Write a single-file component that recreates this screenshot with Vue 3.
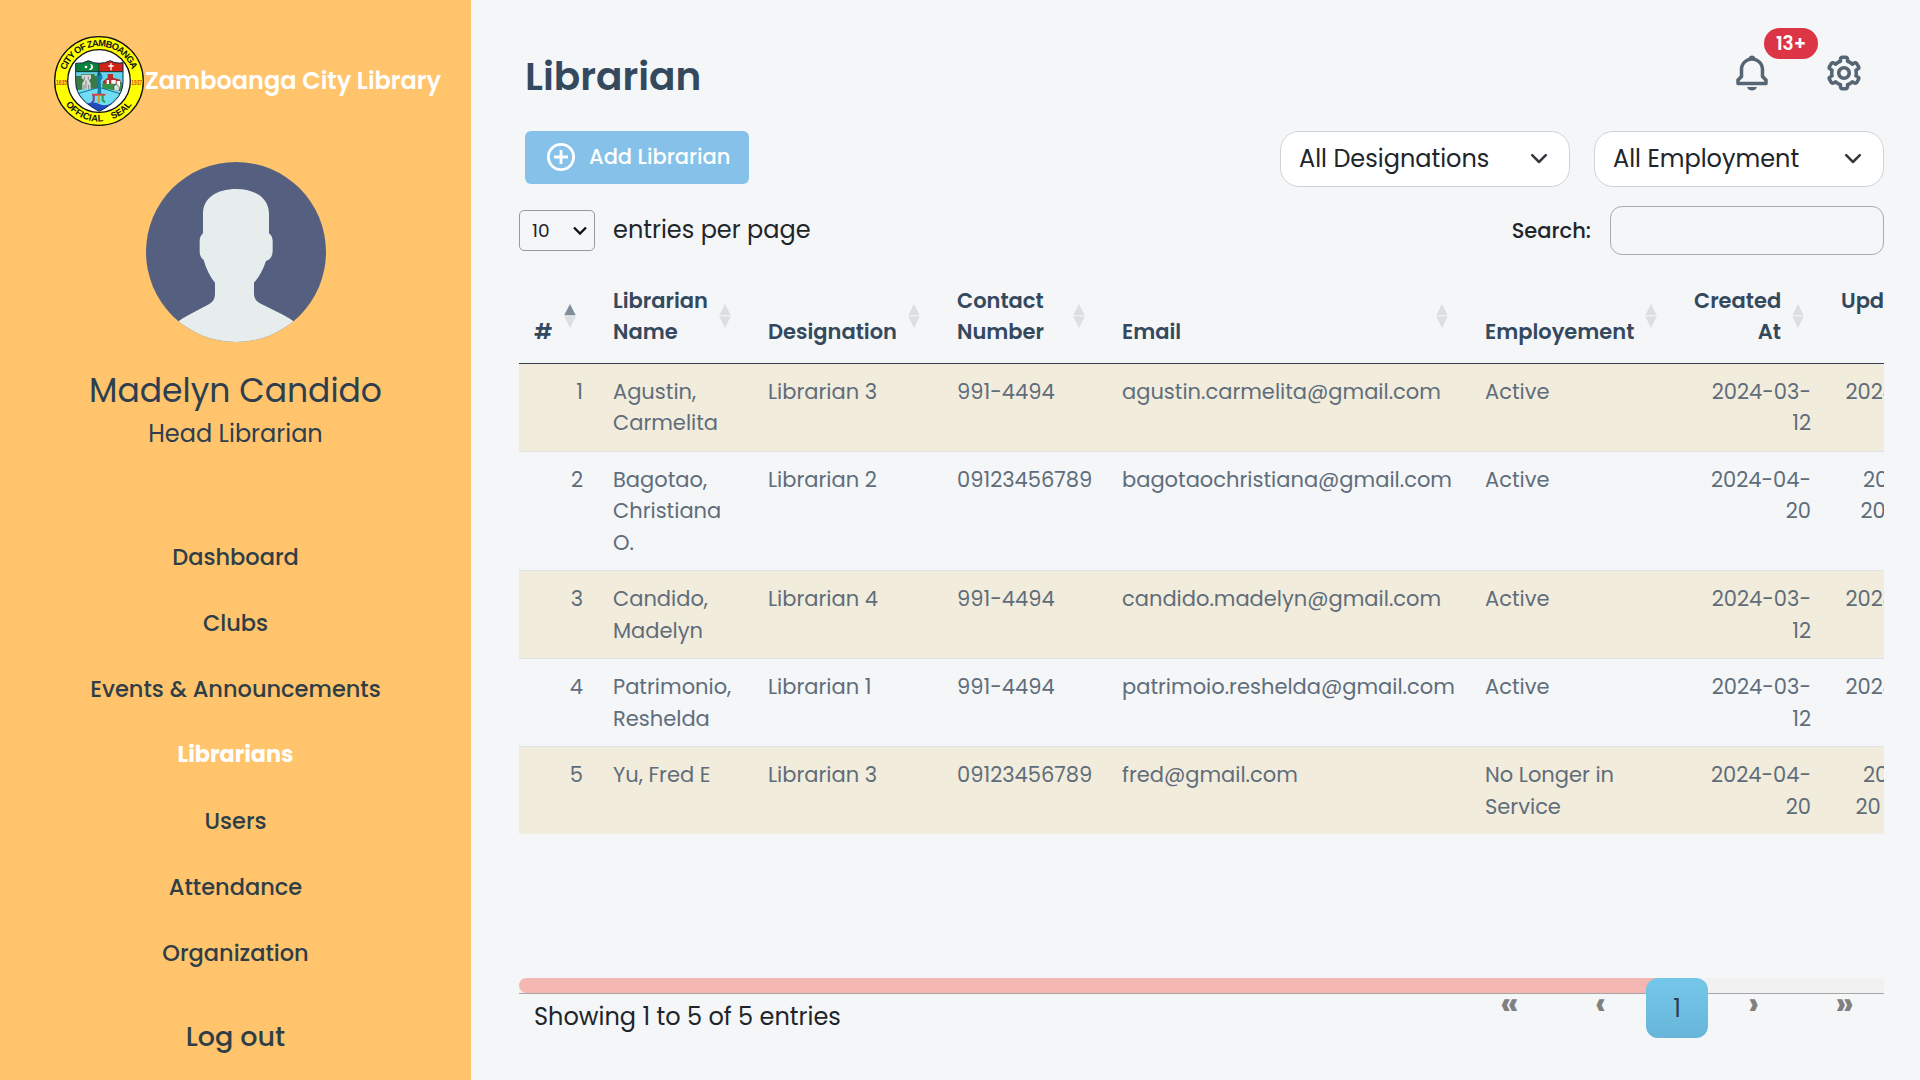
<script setup>
const nav = [
  { label: 'Dashboard' },
  { label: 'Clubs' },
  { label: 'Events & Announcements' },
  { label: 'Librarians', active: true },
  { label: 'Users' },
  { label: 'Attendance' },
  { label: 'Organization' },
]

const filters = ['All Designations', 'All Employment']

const colWidths = [79, 155, 189, 165, 363, 209, 147, 150]

const columns = [
  { lines: ['#'], sorted: true },
  { lines: ['Librarian', 'Name'] },
  { lines: ['Designation'] },
  { lines: ['Contact', 'Number'] },
  { lines: ['Email'] },
  { lines: ['Employement'] },
  { lines: ['Created', 'At'], right: true },
  { lines: ['Updated', '\u00a0'], clipped: true },
]

// Each cell is a list of lines; the last column carries an indent per line.
const rows = [
  {
    cells: [['1'], ['Agustin,', 'Carmelita'], ['Librarian 3'], ['991-4494'], ['agustin.carmelita@gmail.com'], ['Active'], ['2024-03-', '12']],
    updated: [['2024-03-', 4.5]],
  },
  {
    tall: true,
    cells: [['2'], ['Bagotao,', 'Christiana', 'O.'], ['Librarian 2'], ['09123456789'], ['bagotaochristiana@gmail.com'], ['Active'], ['2024-04-', '20']],
    updated: [['20', 22], ['20', 19.5]],
  },
  {
    cells: [['3'], ['Candido,', 'Madelyn'], ['Librarian 4'], ['991-4494'], ['candido.madelyn@gmail.com'], ['Active'], ['2024-03-', '12']],
    updated: [['2024-03-', 4.5]],
  },
  {
    cells: [['4'], ['Patrimonio,', 'Reshelda'], ['Librarian 1'], ['991-4494'], ['patrimoio.reshelda@gmail.com'], ['Active'], ['2024-03-', '12']],
    updated: [['2024-03-', 4.5]],
  },
  {
    cells: [['5'], ['Yu, Fred E'], ['Librarian 3'], ['09123456789'], ['fred@gmail.com'], ['No Longer in', 'Service'], ['2024-04-', '20']],
    updated: [['20', 22], ['20', 14.5]],
  },
]
</script>

<template>
  <div class="app">
    <aside class="sidebar">
      <div class="brand">
        <svg class="seal" viewBox="162 108 270 270">
          <defs>
            <path id="arc-top" d="M198 211 A104 104 0 0 1 396 211" />
            <path id="arc-bottom" d="M197 313 A122 122 0 0 0 399 309" />
            <clipPath id="shield"><path d="M227 190 Q248 192 265 182 Q280 190 297 190 Q314 190 331 182 Q346 192 369 188 V245 C369 290 335 315 298 334 C262 315 227 290 227 245 Z" /></clipPath>
          </defs>
          <circle cx="297" cy="243" r="133" fill="#ffff00" stroke="#111" stroke-width="4" />
          <circle cx="297" cy="243" r="94" fill="#fff" stroke="#111" stroke-width="4" />
          <g clip-path="url(#shield)">
            <rect x="220" y="178" width="156" height="160" fill="#63d5ea" />
            <rect x="220" y="178" width="78" height="37" fill="#08813c" />
            <rect x="298" y="178" width="78" height="37" fill="#cf2418" />
            <path d="M226 228h18v-6h40v6h12v42h-70z" fill="#397a46" />
            <path d="M245 224h28v12l-6 4 5 10v26h-25v-26l6-10-8-5z" fill="#d7d5d5" />
            <path d="M253 230v9M265 230v9M252 255v18M266 255v18M258 242v24" stroke="#858585" stroke-width="3" />
            <path d="M306 252l20-10 40 4v28l-30 14-28-20z" fill="#359447" />
            <path d="M309 244l14-11v-11h16v11l22 6v12h-52z" fill="#b92c2b" />
            <path d="M320 240h7v12h-7zM334 240h13v11h-13zM350 243h10v23h-10z" fill="#fff" />
            <path d="M341 258l9-6 8 9v12h-16z" fill="#ddd" stroke="#333" stroke-width="2" />
            <path d="M227 271l70-7 69 10-68 64z" fill="#70ddf5" />
            <path d="M227 283L297 262L367 283" fill="none" stroke="#186f88" stroke-width="3" />
            <path d="M292 218q8-5 13 4l3 12-6 8 2 42h-12l2-42-5-10z" fill="#167da8" />
            <path d="M276 284h40" stroke="#d9433c" stroke-width="6" />
            <path d="M281 286v16l-6 7" fill="none" stroke="#7e3a98" stroke-width="6" />
            <path d="M296 286v23" stroke="#cf9c22" stroke-width="6" />
            <path d="M308 286v15l7 6" fill="none" stroke="#2c9c4a" stroke-width="6" />
            <path d="M262 311q18-7 36 1t36-2l-35 28z" fill="#234bc0" />
            <path d="M297 190V228M227 215H369" stroke="#15352b" stroke-width="3" />
          </g>
          <path d="M270 192a9 9 0 1 1-4 17a10 10 0 0 0 4-17z" fill="#fff" />
          <circle cx="258" cy="201" r="4" fill="#fff" />
          <path d="M333 190v21M325 198h16" stroke="#fff" stroke-width="4" />
          <path d="M227 190 Q248 192 265 182 Q280 190 297 190 Q314 190 331 182 Q346 192 369 188 V245 C369 290 335 315 298 334 C262 315 227 290 227 245 Z" fill="none" stroke="#14243d" stroke-width="3" />
          <text class="seal-text"><textPath href="#arc-top" textLength="260">CITY OF ZAMBOANGA</textPath></text>
          <text class="seal-text"><textPath href="#arc-bottom" textLength="130">OFFICIAL</textPath></text>
          <text class="seal-text"><textPath href="#arc-bottom" startOffset="158" textLength="74">SEAL</textPath></text>
          <text x="168" y="256" textLength="33" lengthAdjust="spacingAndGlyphs" class="seal-year">1635</text>
          <text x="394" y="256" textLength="32" lengthAdjust="spacingAndGlyphs" class="seal-year">1937</text>
        </svg>
        <span class="brand-name">Zamboanga City Library</span>
      </div>

      <svg class="avatar" viewBox="438 486 540 540">
        <defs><clipPath id="avatar-clip"><circle cx="708" cy="756" r="270" /></clipPath></defs>
        <g clip-path="url(#avatar-clip)">
          <rect x="438" y="486" width="540" height="540" fill="#556080" />
          <path fill="#e7eced" d="M708 567C766 567 807 594 807 642V700C815 706 818 715 818 723V752C818 768 811 779 798 783C790 808 778 830 762 848V880C762 896 769 905 784 912L846 943Q866 953 890 970V1040H526V970Q550 953 570 943L628 912C640 905 645 896 645 880V848C630 830 619 808 611 780C603 774 599 766 599 752V723C599 715 602 706 609 700V642C609 594 650 567 708 567Z" />
        </g>
      </svg>

      <div class="user-name">Madelyn Candido</div>
      <div class="user-role">Head Librarian</div>

      <nav class="nav">
        <a v-for="item in nav" :key="item.label" class="nav-item" :class="{ active: item.active }">{{ item.label }}</a>
      </nav>
      <a class="logout">Log out</a>
    </aside>

    <main class="main">
      <header class="header">
        <h1 class="title">Librarian</h1>
        <div class="header-icons">
          <div class="bell">
            <svg viewBox="0 0 24 24" class="icon"><path d="M19 13.586V10c0-3.217-2.185-5.927-5.145-6.742C13.562 2.520 12.846 2 12 2s-1.562.520-1.855 1.258C7.185 4.074 5 6.783 5 10v3.586l-1.707 1.707A.996.996 0 0 0 3 16v2a1 1 0 0 0 1 1h16a1 1 0 0 0 1-1v-2a.996.996 0 0 0-.293-.707L19 13.586zM19 17H5v-.586l1.707-1.707A.996.996 0 0 0 7 14v-4c0-2.757 2.243-5 5-5s5 2.243 5 5v4c0 .266.105.520.293.707L19 16.414V17zm-7 5a2.980 2.980 0 0 0 2.818-2H9.182A2.980 2.980 0 0 0 12 22z" /></svg>
            <span class="badge">13+</span>
          </div>
          <svg viewBox="0 0 24 24" class="icon"><path d="M12 16c2.206 0 4-1.794 4-4s-1.794-4-4-4-4 1.794-4 4 1.794 4 4 4zm0-6c1.084 0 2 .916 2 2s-.916 2-2 2-2-.916-2-2 .916-2 2-2z" /><path d="m2.845 16.136 1 1.730c.531.917 1.809 1.261 2.730.730l.529-.306A8.100 8.100 0 0 0 9 19.402V20c0 1.103.897 2 2 2h2c1.103 0 2-.897 2-2v-.598a8.132 8.132 0 0 0 1.896-1.111l.529.306c.923.530 2.198.188 2.731-.731l.999-1.729a2.001 2.001 0 0 0-.731-2.732l-.505-.292a7.718 7.718 0 0 0 0-2.224l.505-.292a2.002 2.002 0 0 0 .731-2.732l-.999-1.729c-.531-.920-1.808-1.265-2.731-.732l-.529.306A8.100 8.100 0 0 0 15 4.598V4c0-1.103-.897-2-2-2h-2c-1.103 0-2 .897-2 2v.598a8.132 8.132 0 0 0-1.896 1.111l-.529-.306c-.924-.531-2.200-.187-2.731.732l-.999 1.729a2.001 2.001 0 0 0 .731 2.732l.505.292a7.683 7.683 0 0 0 0 2.223l-.505.292a2.003 2.003 0 0 0-.731 2.733zm3.326-2.758A5.703 5.703 0 0 1 6 12c0-.462.058-.926.170-1.378a.999.999 0 0 0-.470-1.108l-1.123-.650.998-1.729 1.145.662a.997.997 0 0 0 1.188-.142 6.071 6.071 0 0 1 2.384-1.399A1 1 0 0 0 11 5.300V4h2v1.300a1 1 0 0 0 .708.956 6.083 6.083 0 0 1 2.384 1.399.999.999 0 0 0 1.188.142l1.144-.661 1 1.729-1.124.649a1 1 0 0 0-.470 1.108c.112.452.170.916.170 1.378 0 .461-.058.925-.171 1.378a1 1 0 0 0 .471 1.108l1.123.649-.998 1.729-1.145-.661a.996.996 0 0 0-1.188.142 6.071 6.071 0 0 1-2.384 1.399A1 1 0 0 0 13 18.700l.002 1.300H11v-1.300a1 1 0 0 0-.708-.956 6.083 6.083 0 0 1-2.384-1.399.992.992 0 0 0-1.188-.141l-1.144.662-1-1.729 1.124-.651a1 1 0 0 0 .471-1.108z" /></svg>
        </div>
      </header>

      <section class="toolbar">
        <button class="add-btn">
          <svg width="28" height="28" viewBox="0 0 28 28" fill="none" stroke="#fff" stroke-width="2.800"><circle cx="14" cy="14" r="12.600" /><path d="M14 7v14M7 14h14" /></svg>
          <span>Add Librarian</span>
        </button>
        <div class="filters">
          <div v-for="f in filters" :key="f" class="filter">
            <span>{{ f }}</span>
            <svg width="18" height="12" viewBox="0 0 18 12" fill="none" stroke="#343a40" stroke-width="2.500" stroke-linecap="round" stroke-linejoin="round"><path d="M2.200 2.200 9 9l6.800-6.800" /></svg>
          </div>
        </div>
      </section>

      <section class="controls">
        <div class="page-size">
          <span>10</span>
          <svg width="14" height="10" viewBox="0 0 14 10" fill="none" stroke="#111" stroke-width="2.300"><path d="M1 1.500 7 7.500l6-6" /></svg>
        </div>
        <div class="entries">entries per page</div>
        <div class="search-label">Search:</div>
        <input class="search" type="text" />
      </section>

      <section class="table-wrap">
        <table class="table">
          <colgroup><col v-for="(w, i) in colWidths" :key="i" :style="{ width: w + 'px' }" /></colgroup>
          <thead>
            <tr>
              <th v-for="(c, i) in columns" :key="i" :class="{ right: c.right }">
                <div v-for="l in c.lines" :key="l" class="line">{{ l }}</div>
                <svg v-if="!c.clipped" class="sort" width="12" height="24" viewBox="0 0 12 24">
                  <path d="M6 0 11.800 11.300H.2z" :fill="c.sorted ? '#818c99' : '#dcdee3'" />
                  <path d="M6 24 11.800 12.300H.2z" fill="#dcdee3" />
                </svg>
              </th>
            </tr>
          </thead>
          <tbody>
            <tr v-for="(r, ri) in rows" :key="ri" :class="{ odd: ri % 2 === 0, tall: r.tall }">
              <td v-for="(c, ci) in r.cells" :key="ci" :class="{ right: ci === 0 || ci === 6 }">
                <div v-for="(l, li) in c" :key="li" class="line">{{ l }}</div>
              </td>
              <td>
                <div v-for="(u, ui) in r.updated" :key="ui" class="line" :style="{ paddingLeft: u[1] + 'px' }">{{ u[0] }}</div>
              </td>
            </tr>
          </tbody>
        </table>
      </section>

      <div class="scrollbar"><div class="thumb"></div></div>
      <footer class="footer">
        <div class="info">Showing 1 to 5 of 5 entries</div>
        <div class="pagination">
          <span class="arrow">«</span>
          <span class="arrow">‹</span>
          <span class="page">1</span>
          <span class="arrow">›</span>
          <span class="arrow">»</span>
        </div>
      </footer>
    </main>
  </div>
</template>

<style>
body {
  margin: 0;
  overflow: hidden;
}
</style>

<style scoped>
.app {
  display: flex;
  width: 1920px;
  height: 1080px;
  overflow: hidden;
  background: #f4f6f8;
  color: #212529;
  font-family: Poppins, Inter, sans-serif;
  white-space: nowrap;
}
.app * {
  box-sizing: border-box;
}

/* Sidebar */
.sidebar {
  display: flex;
  flex: none;
  flex-direction: column;
  align-items: center;
  width: 471px;
  height: 1080px;
  background: #ffc46c;
  color: #2c3e50;
}
.brand {
  display: flex;
  align-items: center;
  align-self: flex-start;
  height: 90px;
  margin: 36px 0 0 54px;
}
.seal {
  width: 90px;
  height: 90px;
}
.seal-text {
  font: bold 28px "Liberation Sans", sans-serif;
  fill: #111;
}
.seal-year {
  font: bold 22px "Liberation Sans", sans-serif;
  fill: #d2461e;
}
.brand-name {
  padding: 0 0 1px 1px;
  color: #fff;
  font-size: 24px;
  font-weight: 600;
}
.avatar {
  width: 180px;
  height: 180px;
  margin-top: 36px;
}
.user-name {
  height: 48px;
  margin-top: 25px;
  font-size: 33px;
  line-height: 48px;
}
.user-role {
  height: 36px;
  margin-top: 1px;
  font-size: 24px;
  line-height: 36px;
}
.nav {
  display: flex;
  flex-direction: column;
  align-items: center;
  margin-top: 72px;
}
.nav-item {
  height: 66px;
  color: #2f3e46;
  font-size: 22.500px;
  font-weight: 500;
  line-height: 66px;
}
.nav-item.active {
  color: #fff;
  font-weight: 700;
  font-size: 22.300px;
}
.logout {
  height: 60px;
  margin-top: 21px;
  color: #2f3e46;
  font-size: 27px;
  font-weight: 500;
  line-height: 60px;
}

/* Main column */
.main {
  display: flex;
  flex: 1;
  flex-direction: column;
  min-width: 0;
  padding: 0 36px 0 48px;
}
.header {
  display: flex;
  justify-content: space-between;
  height: 131px;
}
.title {
  margin: 47px 0 0 6px;
  color: #34495e;
  font-size: 39px;
  font-weight: 600;
  line-height: 60px;
}
.header-icons {
  display: flex;
  gap: 50px;
  margin: 52px 19px 0 0;
}
.icon {
  display: block;
  width: 42px;
  height: 42px;
  fill: #566573;
}
.bell {
  position: relative;
  width: 42px;
}
.badge {
  position: absolute;
  top: -24px;
  left: 33px;
  width: 54px;
  height: 31px;
  border-radius: 16px;
  background: #dc3545;
  color: #fff;
  font-size: 18.500px;
  font-weight: 600;
  line-height: 32px;
  text-align: center;
}
.toolbar {
  display: flex;
  justify-content: space-between;
  height: 56px;
}
.add-btn {
  display: flex;
  align-items: center;
  gap: 14px;
  width: 224px;
  height: 53px;
  margin-left: 6px;
  padding: 0 0 2px 22px;
  border: 0;
  border-radius: 6px;
  background: #85c1e9;
  color: #fff;
  font: 500 21px Poppins, Inter, sans-serif;
}
.filters {
  display: flex;
  gap: 24px;
}
.filter {
  display: flex;
  align-items: center;
  justify-content: space-between;
  width: 290px;
  height: 56px;
  padding: 0 21px 0 18px;
  border: 1px solid #ced4da;
  border-radius: 19px;
  background: #fff;
  font-size: 24px;
}
.filter span {
  padding-bottom: 1px;
}
.controls {
  display: flex;
  align-items: center;
  height: 49px;
  margin-top: 19px;
}
.page-size {
  display: flex;
  align-items: center;
  justify-content: space-between;
  width: 76px;
  height: 41px;
  padding: 0 7px 0 12px;
  border: 1px solid #999;
  border-radius: 5px;
  font-size: 18.500px;
}
.entries {
  margin-left: 18px;
  padding-bottom: 3px;
  font-size: 24px;
}
.search-label {
  margin-left: auto;
  font-size: 21px;
  font-weight: 500;
}
.search {
  width: 274px;
  height: 49px;
  margin-left: 19px;
  border: 1px solid #aaa;
  border-radius: 12px;
  background: transparent;
}

/* Table */
.table-wrap {
  height: 723px;
  overflow: hidden;
}
.table {
  width: 1457px;
  border-collapse: separate;
  border-spacing: 0;
  table-layout: fixed;
  font-size: 21px;
}
.line {
  line-height: 31.500px;
}
th .line {
  line-height: 31px;
}
th {
  position: relative;
  height: 109px;
  padding: 0 0 16px 15px;
  border-bottom: 1px solid #34404f;
  color: #34495e;
  font-weight: 600;
  text-align: left;
  vertical-align: bottom;
}
th.right {
  padding-right: 45px;
  text-align: right;
}
.sort {
  position: absolute;
  top: 49px;
  right: 22px;
}
td {
  height: 88px;
  padding: 12px 0 0 15px;
  border-bottom: 1px solid #dee2e6;
  color: #5f6d7b;
  vertical-align: top;
}
tr:nth-child(-n + 2) td {
  padding-top: 11.500px;
}
td.right {
  padding-right: 15px;
  text-align: right;
}
.odd td {
  background: #f2ecdc;
}
.tall td {
  height: 119px;
}
tbody tr:last-child td {
  height: 87px;
  border-bottom-color: #f0ede5;
}

/* Footer */
.scrollbar {
  height: 16px;
  border-bottom: 1px solid #a6a6a6;
  border-radius: 8px 0 0 0;
  background: #f1f1f1;
}
.thumb {
  width: 1150px;
  height: 15px;
  border-radius: 8px;
  background: #f5b7b1;
}
.footer {
  display: flex;
  justify-content: space-between;
  height: 60px;
  margin: -16px -6px 0 0;
}
.info {
  margin: 21px 0 0 15px;
  font-size: 24px;
  line-height: 36px;
}
.pagination {
  display: flex;
  position: relative;
}
.arrow {
  width: 91px;
  color: #808080;
  font-size: 33px;
  font-weight: 700;
  line-height: 52px;
  text-align: center;
}
.page {
  width: 62px;
  height: 60px;
  border-radius: 12px;
  background: linear-gradient(#75c7e9, #67b6da);
  color: #2c3e50;
  font-size: 24px;
  line-height: 61px;
  text-align: center;
}
</style>
